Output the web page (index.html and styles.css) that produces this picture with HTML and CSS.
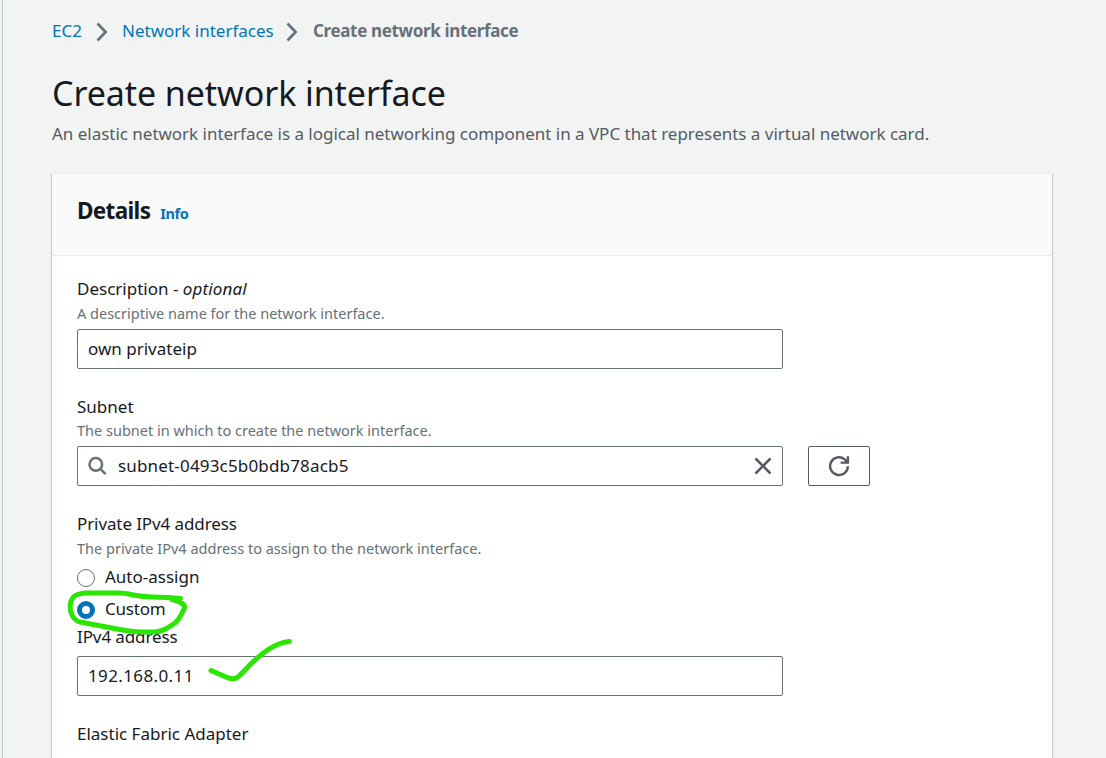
FILE: index.html
```
<!DOCTYPE html>
<html lang="en">
<head>
<meta charset="utf-8">
<title>Create network interface</title>
<link rel="stylesheet" href="styles.css">
</head>
<body>
<main class="page">
  <nav class="crumbs">
    <a class="crumb-ec2">EC2</a>
    <svg class="chevron" width="12" height="20" viewBox="0 0 12 20"><path d="M1.5 1.5 9.7 10 1.5 18.5"/></svg>
    <a class="crumb-net">Network interfaces</a>
    <svg class="chevron" width="12" height="20" viewBox="0 0 12 20"><path d="M1.5 1.5 9.7 10 1.5 18.5"/></svg>
    <span class="crumb-current">Create network interface</span>
  </nav>
  <h1 class="title">Create network interface</h1>
  <p class="intro">An elastic network interface is a logical networking component in a VPC that represents a virtual network card.</p>
  <section class="card">
    <header class="card-head"><h2 class="card-title">Details</h2><a class="info">Info</a></header>
    <div class="card-body">
      <div class="field field-description">
        <label class="label">Description - <em class="label-optional">optional</em></label>
        <p class="hint">A descriptive name for the network interface.</p>
        <div class="input"><span>own privateip</span></div>
      </div>
      <div class="field field-subnet">
        <label class="label">Subnet</label>
        <p class="hint">The subnet in which to create the network interface.</p>
        <div class="row">
          <div class="input input-search">
            <svg class="search" width="20" height="20" viewBox="0 0 20 20"><circle cx="7.800" cy="8.400" r="6.300"/><path d="m12.300 12.900 5.300 5.300"/></svg>
            <span class="value-subnet">subnet-0493c5b0bdb78acb5</span>
            <svg class="clear" width="18" height="18" viewBox="0 0 18 18"><path d="m1.500 1.500 15 15m0-15-15 15"/></svg>
          </div>
          <button class="refresh"><svg width="22" height="22" viewBox="0 0 22 22"><path d="M19.900 11.300a8.900 8.900 0 1 1-3.200-7L19 6.500M19.900 1.200v6.400h-7.300"/></svg></button>
        </div>
      </div>
      <div class="field field-private">
        <label class="label label-address">Private IPv4 address</label>
        <p class="hint">The private IPv4 address to assign to the network interface.</p>
        <div class="radio"><i class="dot"></i><span>Auto-assign</span></div>
        <div class="radio radio-second"><i class="dot dot-on"></i><span class="radio-custom">Custom</span></div>
      </div>
      <div class="field field-ip">
        <label class="label label-address">IPv4 address</label>
        <div class="input"><span class="value-ip">192.168.0.11</span></div>
      </div>
      <div class="field field-adapter"><label class="label">Elastic Fabric Adapter</label></div>
    </div>
  </section>
  <svg class="ink" width="240" height="110" viewBox="60 585 240 110">
    <path d="M180.500 598.500C167 597 150 597.500 140 596C132 595 126 593 120 593H86C78 593.500 74 595 72 599C69 604 70 611 72 615C74 619 76 621 80 622L117 629C127 631 135 632 142 632H154C163 632 169 627 175 623C180 619 182 613 184.500 608C185 604 179 601 172 599.500"/>
    <path d="M211 670.500 226 677Q234 681 239 676C246 670 248 666 255 660C265 651 277 642 289.500 641.500"/>
  </svg>
</main>
</body>
</html>
```
FILE: styles.css
```
* { box-sizing: border-box; }
body { margin: 0; background: #f2f4f4; color: #16191f; font-family: "Noto Sans", "Open Sans", sans-serif; font-size: 17px; line-height: 24px; }
h1, h2, p { margin: 0; font-weight: 400; }
svg { display: block; flex: none; fill: none; }
.page { position: relative; height: 758px; margin-left: 2px; border-left: 1px solid #bfc7c9; padding: 18px 53px 0 49px; overflow: hidden; white-space: nowrap; }
.crumbs { display: flex; align-items: center; height: 26px; color: #0073bb; }
.crumb-ec2 { width: 40px; }
.crumb-net { width: 163px; margin-left: 14px; }
.crumb-current { margin-left: 15px; color: #687078; font-weight: 700; letter-spacing: -0.35px; }
.chevron { margin-left: 1px; position: relative; top: 1px; stroke: #687078; stroke-width: 2.600; }
.crumbs .crumb-ec2 + .chevron { margin-left: 4px; }
.title { margin-top: 26px; font-size: 34px; line-height: 46px; letter-spacing: -0.08px; }
.intro { margin-top: 6px; color: #545b64; letter-spacing: -0.02px; }
.card { margin: 27px 0 0 -1px; height: 600px; background: #fff; border: 1px solid #c3c8ca; border-top-color: #eaeded; }
.card-head { display: flex; align-items: baseline; gap: 10px; height: 82px; padding: 22px 0 0 25px; background: #fafafa; border-bottom: 1px solid #eaeded; }
.card-title { font-size: 22.5px; line-height: 30px; font-weight: 700; letter-spacing: -0.65px; }
.info { color: #0073bb; font-size: 14.5px; font-weight: 700; letter-spacing: -0.4px; }
.card-body { padding: 21px 25px 0; }
.label { display: block; }
.label-optional { letter-spacing: 0.15px; }
.label-address { letter-spacing: -0.1px; }
.hint { color: #687078; font-size: 14.5px; }
.input { display: flex; align-items: center; width: 706px; height: 40px; padding: 0 10px; border: 1px solid #687078; border-radius: 2px; background: #fff; }
.field .input { margin-top: 4px; }
.field-subnet { margin-top: 26px; }
.field-subnet .hint { line-height: 23px; }
.row { display: flex; gap: 25px; }
.search { margin-right: 10px; stroke: #687078; stroke-width: 2.500; }
.value-subnet { letter-spacing: 0.17px; }
.value-ip { letter-spacing: 0.38px; }
.clear { margin-left: auto; stroke: #545b64; stroke-width: 2.500; }
.refresh { display: grid; place-items: center; width: 62px; height: 40px; margin-top: 4px; padding: 0; background: #fff; border: 1px solid #545b64; border-radius: 2px; stroke: #545b64; stroke-width: 2.400; }
.field-private { margin-top: 26px; }
.radio { display: flex; align-items: center; gap: 10px; height: 24px; margin-top: 5px; }
.radio-second { margin-top: 8px; }
.radio-custom { letter-spacing: -0.2px; }
.dot { width: 18px; height: 18px; border: 1px solid #687078; border-radius: 50%; position: relative; top: 1px; }
.dot-on { border: 5px solid #0073bb; }
.field-ip { margin-top: 4px; }
.field-ip .input { margin-top: 7px; }
.field-adapter { margin-top: 26px; }
.ink { position: absolute; left: 57px; top: 585px; stroke: #2be600; stroke-width: 5; stroke-linecap: round; stroke-linejoin: round; }
```
